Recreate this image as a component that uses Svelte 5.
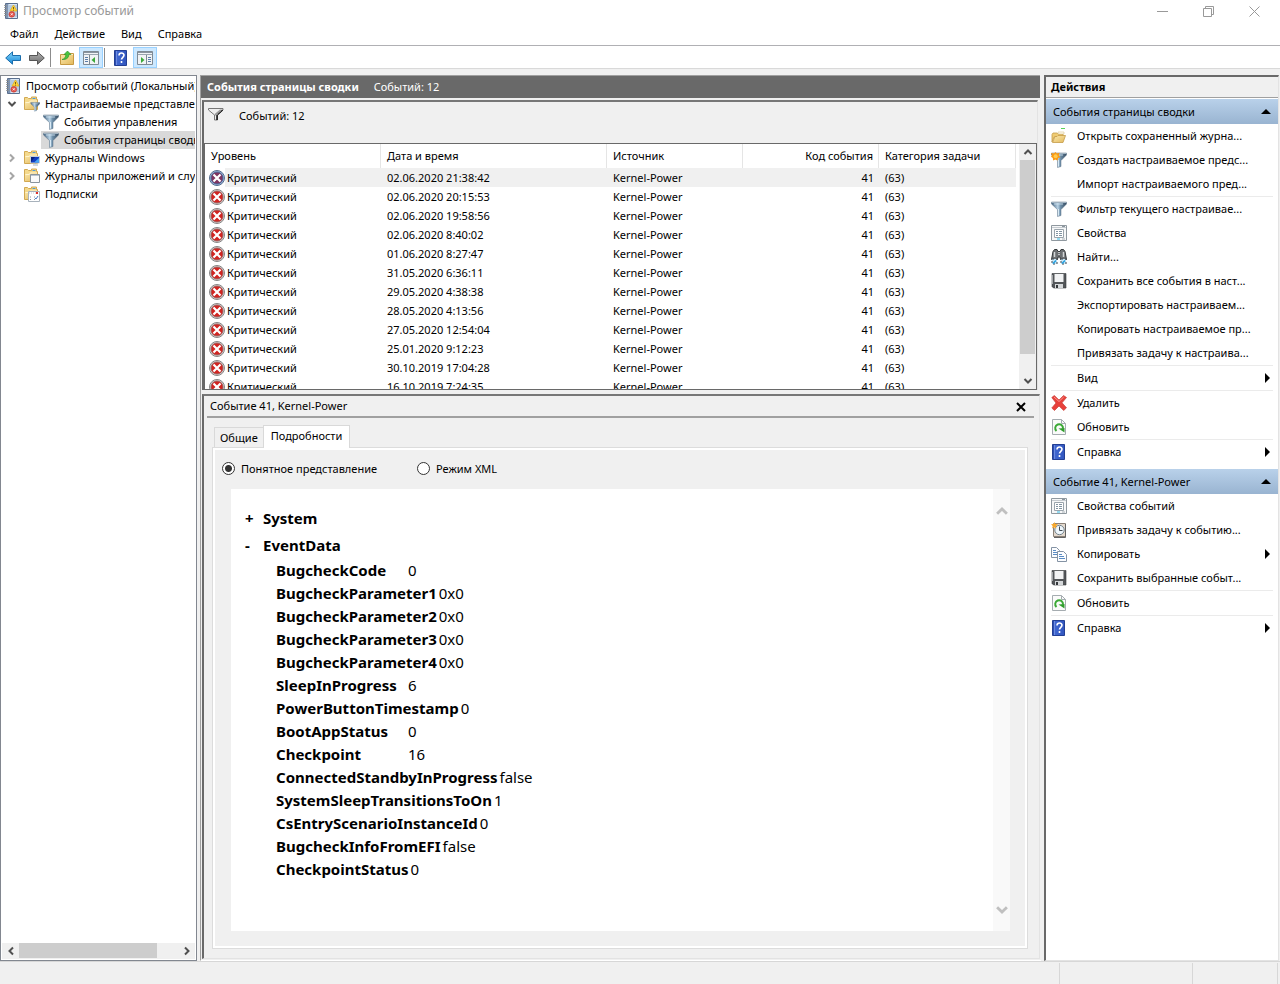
<script lang="ts">
	type Action = { icon?: string; label?: string; more?: boolean; separator?: boolean };

	const menu = ['Файл', 'Действие', 'Вид', 'Справка'];

	const tree = [
		{ label: 'Просмотр событий (Локальный)', icon: 'log', level: 0 },
		{ label: 'Настраиваемые представления', icon: 'folderFilter', level: 1, open: true },
		{ label: 'События управления', icon: 'filter', level: 2 },
		{ label: 'События страницы сводки', icon: 'filter', level: 2, selected: true },
		{ label: 'Журналы Windows', icon: 'folderScreen', level: 1, open: false },
		{ label: 'Журналы приложений и служб', icon: 'folderApp', level: 1, open: false },
		{ label: 'Подписки', icon: 'folderSub', level: 1 }
	];

	const dates = [
		'02.06.2020 21:38:42',
		'02.06.2020 20:15:53',
		'02.06.2020 19:58:56',
		'02.06.2020 8:40:02',
		'01.06.2020 8:27:47',
		'31.05.2020 6:36:11',
		'29.05.2020 4:38:38',
		'28.05.2020 4:13:56',
		'27.05.2020 12:54:04',
		'25.01.2020 9:12:23',
		'30.10.2019 17:04:28',
		'16.10.2019 7:24:35'
	];

	const eventData = [
		['BugcheckCode', '0'],
		['BugcheckParameter1', '0x0'],
		['BugcheckParameter2', '0x0'],
		['BugcheckParameter3', '0x0'],
		['BugcheckParameter4', '0x0'],
		['SleepInProgress', '6'],
		['PowerButtonTimestamp', '0'],
		['BootAppStatus', '0'],
		['Checkpoint', '16'],
		['ConnectedStandbyInProgress', 'false'],
		['SystemSleepTransitionsToOn', '1'],
		['CsEntryScenarioInstanceId', '0'],
		['BugcheckInfoFromEFI', 'false'],
		['CheckpointStatus', '0']
	];

	const groups: { title: string; items: Action[] }[] = [
		{
			title: 'События страницы сводки',
			items: [
				{ icon: 'open', label: 'Открыть сохраненный журна...' },
				{ icon: 'newFilter', label: 'Создать настраиваемое предс...' },
				{ label: 'Импорт настраиваемого пред...' },
				{ separator: true },
				{ icon: 'filter', label: 'Фильтр текущего настраивае...' },
				{ icon: 'props', label: 'Свойства' },
				{ icon: 'find', label: 'Найти...' },
				{ icon: 'save', label: 'Сохранить все события в наст...' },
				{ label: 'Экспортировать настраиваем...' },
				{ label: 'Копировать настраиваемое пр...' },
				{ label: 'Привязать задачу к настраива...' },
				{ separator: true },
				{ label: 'Вид', more: true },
				{ separator: true },
				{ icon: 'delete', label: 'Удалить' },
				{ icon: 'refresh', label: 'Обновить' },
				{ separator: true },
				{ icon: 'help', label: 'Справка', more: true }
			]
		},
		{
			title: 'Событие 41, Kernel-Power',
			items: [
				{ icon: 'props', label: 'Свойства событий' },
				{ icon: 'task', label: 'Привязать задачу к событию...' },
				{ icon: 'copy', label: 'Копировать', more: true },
				{ icon: 'save', label: 'Сохранить выбранные событ...' },
				{ separator: true },
				{ icon: 'refresh', label: 'Обновить' },
				{ separator: true },
				{ icon: 'help', label: 'Справка', more: true }
			]
		}
	];

	let selectedRow = $state(0);
	let view = $state('friendly');
</script>

<!-- gradients shared by the icons -->
<svg class="defs" aria-hidden="true">
	<defs>
		<linearGradient id="g-folder" x2="1" y2="1">
			<stop offset="0" stop-color="#fbe9ae" /><stop offset="1" stop-color="#e3b95c" />
		</linearGradient>
		<linearGradient id="g-funnel" x2="1" y2="0">
			<stop offset="0" stop-color="#3f5f7d" /><stop offset=".42" stop-color="#b9d3e6" /><stop offset=".6" stop-color="#6f90aa" /><stop offset="1" stop-color="#34495e" />
		</linearGradient>
		<linearGradient id="g-blue" x2="0" y2="1">
			<stop offset="0" stop-color="#83d4fa" /><stop offset="1" stop-color="#1687d6" />
		</linearGradient>
		<linearGradient id="g-gray" x2="0" y2="1">
			<stop offset="0" stop-color="#b4b4b4" /><stop offset="1" stop-color="#6c6c6c" />
		</linearGradient>
		<linearGradient id="g-help" x2="1" y2="0">
			<stop offset="0" stop-color="#2341a0" /><stop offset=".25" stop-color="#3f66cf" /><stop offset="1" stop-color="#3155be" />
		</linearGradient>
	</defs>
</svg>

{#snippet funnel()}
	<path d="M.5 1h15v2L10 8.600v5.900l-3.500 1V8.600L.5 3z" fill="url(#g-funnel)" stroke="#5c7386" stroke-width=".5" />
	<path d="M.5 1.500h15" stroke="#9fb1bf" />
	<path d="M3 3h9" stroke="#d6e6f1" stroke-width=".8" />
	<path d="M7.500 8v6.500" stroke="#d9eaf5" />
{/snippet}

{#snippet folder()}
	<path d="M.5 1.500h3l1 1h3V1h5v2.500h1v10H.5z" fill="#f4d98c" stroke="#d2a952" />
	<path d="M8.500 2.500h3" stroke="#4f9bd8" />
	<path d="M1 6h4l1-1.500h7V13H1z" fill="url(#g-folder)" />
	<path d="M1.500 6.500h3.800l1-1.500H13" fill="none" stroke="#fff3cc" />
{/snippet}

{#snippet icon(name: string)}
	<svg class="icon" viewBox="0 0 16 16" aria-hidden="true">
		{#if name === 'log'}
			<path d="M2.500.5h12v15h-12z" fill="#b5c9e0" stroke="#5a6f8e" />
			<path d="M3 1h2v14H3z" fill="#7d94b3" />
			<path d="M6 1.500h8M6 14.500h8" stroke="#dbe7f3" />
			<path d="M1 2.500h3M1 4.500h3M1 6.500h3M1 8.500h3M1 10.500h3M1 12.500h3" stroke="#8f8f8f" stroke-width=".8" />
			<path d="M10.500 2 14 8H7z" fill="#ffd33a" stroke="#e3b21c" stroke-width=".8" stroke-linejoin="round" />
			<path d="M10.500 4v2.200M10.500 6.800v.8" stroke="#5a4708" stroke-width=".8" />
			<circle cx="8.800" cy="11.300" r="2.900" fill="#e0524a" stroke="#c23029" stroke-width=".5" />
			<path d="m7.700 10.200 2.200 2.200m0-2.200-2.200 2.200" stroke="#fff" stroke-width=".8" />
		{:else if name === 'filter'}
			{@render funnel()}
		{:else if name === 'newFilter'}
			{@render funnel()}
			<path d="m4.500 0 1.200 1.500L8.500.8 7.800 3.500 9.500 5.200l-2.400.9-.4 2.400-2.200-1-2.400 1L1.800 6 0 4.800 1 2.900 0 .9l2.900.6z" fill="#fb9a12" />
			<circle cx="4.600" cy="4.200" r="2" fill="#ffcb4f" />
		{:else if name === 'folderFilter'}
			{@render folder()}
			<g transform="translate(6.500 6) scale(.6)">{@render funnel()}</g>
		{:else if name === 'folderScreen'}
			{@render folder()}
			<path d="M6.500 6.500h9v6.500h-9z" fill="#103cc0" stroke="#c4d0de" />
			<path d="M7 7h4l-4 5z" fill="#0a217c" /><path d="M10 12.500 15 8v4.500z" fill="#43a4f4" />
			<path d="M9 15h5M11 13.500h1" stroke="#a4b0bc" />
		{:else if name === 'folderApp'}
			{@render folder()}
			<path d="M6.500 6.500h9v8h-9z" fill="#fafafa" stroke="#8a949c" />
			<path d="M7 7.500h8" stroke="#b9c4cf" />
		{:else if name === 'folderSub'}
			{@render folder()}
			<path d="M4.500 5.500h11v10h-11z" fill="#fff" stroke="#a8b2bc" />
			<path d="M5 7h10" stroke="#c4ccd4" stroke-dasharray="1 1" />
			<path d="M6 11h2m2 0h2M6 13.500h2m2 0h2" stroke="#8b96a4" stroke-dasharray="1 1" />
			<path d="m12 6 2 2m0-2-2 2" stroke="#e0332c" /><path d="m11 12 1 1 2-3" fill="none" stroke="#4a7cc4" />
		{:else if name === 'back' || name === 'forward'}
			<path
				d="M.7 8 7.500 1.800v3.700h8v5h-8v3.700z"
				transform={name === 'forward' ? 'matrix(-1 0 0 1 16 0)' : undefined}
				fill={name === 'back' ? 'url(#g-blue)' : 'url(#g-gray)'}
				stroke={name === 'back' ? '#1a6cab' : '#555'}
				stroke-linejoin="round"
			/>
		{:else if name === 'up'}
			<path d="M1.500 4.500h5l1-1h7v11h-13z" fill="url(#g-folder)" stroke="#c79a42" />
			<path d="M10 4.500h4" stroke="#fff3cc" />
			<path d="M3 9.500C6 8.500 6.800 7 6.800 4.500H5L8.500 1 12 4.500H9.800C9.800 8 7.500 9.800 3 9.500z" fill="#49c43e" stroke="#258a22" stroke-width=".6" />
		{:else if name === 'paneLeft' || name === 'paneRight'}
			<path d="M.500 1.500h15v13H.500z" fill="#f1f3f5" stroke="#7f8a94" />
			<path d="M1 2.500h14" stroke="#8994a0" />
			<path d="M1 4.500h14" stroke="#9aa5b0" />
			{#if name === 'paneLeft'}
				<path d="M6.500 5v9" stroke="#7f8a94" /><path d="M2 7.500h3M2 9.500h3M2 11.500h3" stroke="#5a7ca8" />
				<path d="M12 7v6L8.500 10z" fill="#3ba93a" />
			{:else}
				<path d="M9.500 5v9" stroke="#7f8a94" /><path d="M11 7.500h3M11 9.500h3M11 11.500h3" stroke="#5a7ca8" />
				<path d="M4 7v6l3.500-3z" fill="#3ba93a" />
			{/if}
		{:else if name === 'help'}
			<path d="M1.500.5h12v15h-12z" fill="url(#g-help)" stroke="#233f94" />
			<path d="M3.500 1v14" stroke="#6c8be0" />
			<path d="M6 5.400c.1-3.300 5-3 5-.3 0 2.200-2.500 2.200-2.500 4.500M8.500 11v2" fill="none" stroke="#fff" stroke-width="1.600" />
		{:else if name === 'open'}
			<path d="M1 6.500 2 5h4l1 1h5v3H3L1 14z" fill="#efcb72" stroke="#c59c49" stroke-width=".8" />
			<path d="M1.500 14.500 4 8.500h2l1-1h7.500L12 14.500z" fill="url(#g-folder)" stroke="#c59c49" stroke-width=".8" />
			<path d="M7 4h6v2H7z" fill="#fffdf4" stroke="#d8c28c" stroke-width=".6" />
			<path d="M10 .500h4" stroke="#58d45a" />
		{:else if name === 'props'}
			<path d="M.500.500h15v15H.500z" fill="#f6f7f8" stroke="#8f989f" />
			<path d="M1 2.500h14" stroke="#c5cbd0" /><path d="M11 1.500h3" stroke="#8a959d" />
			<path d="M3.500 4.500h9v8h-9z" fill="#fff" stroke="#9aa4ac" />
			<path d="M5 6.500h2m1 0h3M5 8.500h2m1 0h3M5 10.500h2m1 0h3" stroke="#8294a2" />
			<path d="M6 14h3" stroke="#33bde8" /><path d="M11 14h3" stroke="#aab2b8" />
		{:else if name === 'find'}
			<path d="M2 2.500 3.500.500H6l1 2h2l1-2h2.500l1.500 2 1.500 8h-6L9 8H7l-.5 2.500h-6z" fill="#6d7073" stroke="#35383b" />
			<path d="M3.500 3v5m9-5v5" stroke="#d4d6d8" stroke-width="1.500" />
			<path d="M7 3.500h2m-2 2h2" stroke="#c0c3c6" />
			<path d="M1 10h5v5H1zm9 0h5v5h-5z" fill="#c5e7f9" stroke="#3e474e" stroke-dasharray="2 2" />
			<path d="m2 14.500 3-3m6 3 3-3" stroke="#229fe0" stroke-width="1.500" />
		{:else if name === 'save'}
			<path d="M1 .500h14v14.500H2.500L1 13.500z" fill="#535659" stroke="#36393c" stroke-width=".6" />
			<path d="M3.500 1h9v8h-9z" fill="#f2f3f4" /><path d="M4 11h8v4H4z" fill="#d5d8da" />
			<path d="M5 12h2v3H5z" fill="#34373a" /><path d="M1.500 2v9" stroke="#a2a5a8" />
		{:else if name === 'delete'}
			<path d="m.8 2.500 2.500-2L8 5l4.500-4.500 3 2L11 7.800l4.500 5-2.800 2.700L8 11l-4.500 4.500L.8 13 5 8z" fill="#e8413b" stroke="#c8403a" stroke-width=".7" />
			<path d="m3 2 5 4.500L12.700 2" fill="none" stroke="#fa948d" />
		{:else if name === 'refresh'}
			<path d="M1.500.500h9l4 4v11h-13z" fill="#fafbfa" stroke="#a5acb0" /><path d="M10.500.500v4h4" fill="none" stroke="#a5acb0" />
			<path d="M5.500 12a3.900 3.900 0 1 1 6.500-2.500" fill="none" stroke="#3ba936" stroke-width="2" />
			<path d="M7.500 9.500 13.500 9v4.500z" fill="#2f9c2b" />
		{:else if name === 'task'}
			<path d="M2.500 1.500h12v13h-12z" fill="#e3d9ce" stroke="#8b8177" /><path d="M14.500 2v13.500H3" fill="none" stroke="#646464" />
			<circle cx="8.500" cy="8" r="4.700" fill="#eef6fb" stroke="#74828b" />
			<path d="M8.500 4.500v4h3" fill="none" stroke="#404a52" />
			<path d="m3.500 0 .8 2L7 2.200 5 4l.3 2.400-2-1.200L1 6.400l.7-2.500L0 2.200 2.500 2z" fill="#f7a82c" />
		{:else if name === 'copy'}
			<path d="M.5 1.500h5l3 3v7h-8z" fill="#fcfdff" stroke="#8493a4" />
			<path d="M2 4.500h3M2 6.500h5M2 8.500h4" stroke="#5a8cc4" />
			<path d="M6.500 5.500h6l3 3v7h-9z" fill="#fcfdff" stroke="#8493a4" />
			<path d="M8 8.500h3M8 10.500h5M8 12.500h6" stroke="#5a8cc4" />
		{/if}
	</svg>
{/snippet}

{#snippet chevron(dir: string)}
	<svg class="chevron {dir}" viewBox="0 0 10 10" aria-hidden="true">
		<path d="m1.500 3 3.500 3.500L8.500 3" />
	</svg>
{/snippet}

<div class="window">
	<header class="titlebar">
		{@render icon('log')}
		<span class="title">Просмотр событий</span>
		<button aria-label="Свернуть"><svg viewBox="0 0 11 11"><path d="M0 5.500h11" /></svg></button>
		<button aria-label="Развернуть"><svg viewBox="0 0 11 11"><path d="M.5 2.500h8v8h-8zM2.500 2.500v-2h8v8h-2" /></svg></button>
		<button aria-label="Закрыть"><svg viewBox="0 0 11 11"><path d="m.5.5 10 10m0-10-10 10" /></svg></button>
	</header>

	<nav class="menubar">
		{#each menu as item}
			<button>{item}</button>
		{/each}
	</nav>

	<div class="toolbar">
		<button aria-label="Назад">{@render icon('back')}</button>
		<button aria-label="Вперед">{@render icon('forward')}</button>
		<i></i>
		<button aria-label="Вверх">{@render icon('up')}</button>
		<button class="on" aria-label="Дерево консоли">{@render icon('paneLeft')}</button>
		<i></i>
		<button aria-label="Справка">{@render icon('help')}</button>
		<button class="on" aria-label="Панель действий">{@render icon('paneRight')}</button>
	</div>

	<main>
		<aside class="tree">
			<ul>
				{#each tree as node}
					<li class="level{node.level}" class:selected={node.selected}>
						{#if node.level === 1}
							<span class="toggle">
								{#if node.open !== undefined}{@render chevron(node.open ? 'down' : 'right')}{/if}
							</span>
						{/if}
						<span class="node">{@render icon(node.icon)}<span>{node.label}</span></span>
					</li>
				{/each}
			</ul>
			<div class="hscroll">
				<button aria-label="Влево">{@render chevron('left')}</button>
				<div class="track"><div class="thumb"></div></div>
				<button aria-label="Вправо">{@render chevron('right')}</button>
			</div>
		</aside>

		<section class="center">
			<h1>События страницы сводки <span>Событий: 12</span></h1>

			<div class="events">
				<div class="summary">
					<svg viewBox="0 0 16 13" aria-hidden="true">
						<path d="M.5.500h14.500v1.500L9.500 7v5h-3V7L.5 2z" fill="#eee" stroke="#777" />
						<path d="M9 7v5M9.500 6.500 14.500 2" stroke="#111" stroke-width="1.500" />
						<path d="m7 7 6-5" stroke="#999" stroke-width="2" />
					</svg>
					<span>Событий: 12</span>
				</div>
				<div class="list">
					<div class="rows">
						<table>
							<colgroup>
								<col class="c-level" /><col class="c-date" /><col class="c-source" /><col class="c-code" /><col />
							</colgroup>
							<thead>
								<tr>
									<th>Уровень</th>
									<th>Дата и время</th>
									<th>Источник</th>
									<th class="num">Код события</th>
									<th>Категория задачи</th>
								</tr>
							</thead>
							<tbody>
								{#each dates as date, i}
									<tr class:selected={selectedRow === i} onclick={() => (selectedRow = i)}>
										<td class="level">
											<div>
												<svg class="critical" viewBox="0 0 16 16" aria-hidden="true">
													<circle cx="8" cy="8" r="7.500" class="rim" />
													<circle cx="8" cy="8" r="6" class="disc" />
													<path d="m4.500 4.500 7 7m0-7-7 7" stroke="#fff" stroke-width="2.200" />
												</svg>
												<span>Критический</span>
											</div>
										</td>
										<td>{date}</td>
										<td>Kernel-Power</td>
										<td class="num">41</td>
										<td>(63)</td>
									</tr>
								{/each}
							</tbody>
						</table>
					</div>
					<div class="vscroll">
						<button aria-label="Вверх">{@render chevron('up')}</button>
						<div class="track"><div class="thumb"></div></div>
						<button aria-label="Вниз">{@render chevron('down')}</button>
					</div>
				</div>
			</div>

			<div class="details">
				<header>
					<h2>Событие 41, Kernel-Power</h2>
					<button aria-label="Закрыть"><svg viewBox="0 0 10 10"><path d="m1 1 8 8m0-8-8 8" /></svg></button>
				</header>
				<div class="tabs" role="tablist">
					<button role="tab" aria-selected="false">Общие</button>
					<button role="tab" aria-selected="true">Подробности</button>
				</div>
				<div class="tabpage">
					<div class="modes">
						<label><input type="radio" name="view" value="friendly" bind:group={view} />Понятное представление</label>
						<label><input type="radio" name="view" value="xml" bind:group={view} />Режим XML</label>
					</div>
					<div class="viewer">
						<div class="content">
							<h3><span>+</span>System</h3>
							<h3><span>-</span>EventData</h3>
							<dl>
								{#each eventData as [name, value]}
									<div><dt>{name}</dt><dd>{value}</dd></div>
								{/each}
							</dl>
						</div>
						<div class="vscroll pale">
							<button aria-label="Вверх">{@render chevron('up')}</button>
							<button aria-label="Вниз">{@render chevron('down')}</button>
						</div>
					</div>
				</div>
			</div>
		</section>

		<aside class="actions">
			<h2>Действия</h2>
			{#each groups as group}
				<section>
					<h3>{group.title}<svg viewBox="0 0 10 5" aria-hidden="true"><path d="M0 5 5 0l5 5z" /></svg></h3>
					{#each group.items as item}
						{#if item.separator}
							<hr />
						{:else}
							<button>
								<span class="slot">{#if item.icon}{@render icon(item.icon)}{/if}</span>
								<span class="label">{item.label}</span>
								{#if item.more}
									<svg class="more" viewBox="0 0 5 10" aria-hidden="true"><path d="m0 0 5 5-5 5z" /></svg>
								{/if}
							</button>
						{/if}
					{/each}
				</section>
			{/each}
		</aside>
	</main>

	<footer><span></span><span></span></footer>
</div>

<style>
	:global(body) {
		font-family: 'Noto Sans', 'Open Sans', sans-serif;
		font-size: 11px;
		color: #000;
	}

	.window, .window * {
		box-sizing: border-box;
	}

	.window {
		height: 100vh;
		display: flex;
		flex-direction: column;
		background: #f0f0f0;
		line-height: 18px;
	}

	.defs {
		position: absolute;
		width: 0;
		height: 0;
	}

	button {
		border: 0;
		padding: 0;
		background: none;
		font: inherit;
		color: inherit;
	}

	h1, h2, h3, ul, dl, dd {
		margin: 0;
		padding: 0;
		font-size: inherit;
	}

	svg {
		display: block;
		flex: none;
	}

	.icon {
		width: 16px;
		height: 16px;
	}

	.chevron {
		width: 10px;
		height: 10px;
		fill: none;
		stroke: #505050;
		stroke-width: 2;
	}

	.chevron.up { transform: rotate(180deg); }
	.chevron.left { transform: rotate(90deg); }
	.chevron.right { transform: rotate(-90deg); }

	/* window chrome */
	.titlebar {
		display: flex;
		align-items: center;
		height: 24px;
		padding: 0 3px 2px;
		background: #fff;
		color: #999;
	}

	.title {
		flex: 1;
		margin-left: 4px;
		font-size: 12px;
	}

	.titlebar button {
		display: grid;
		place-items: center;
		width: 46px;
		height: 20px;
	}

	.titlebar button svg {
		width: 11px;
		height: 11px;
		fill: none;
		stroke: #999;
	}

	.menubar {
		display: flex;
		gap: 16px;
		height: 22px;
		padding-left: 10px;
		background: #fff;
		border-bottom: 1px solid #b0b0b4;
	}

	.menubar button {
		height: 20px;
	}

	.toolbar {
		display: flex;
		height: 23px;
		padding: 1px 1px 0;
		background: #fff;
		border-bottom: 1px solid #d9d9d9;
	}

	.toolbar button {
		display: grid;
		place-items: center;
		width: 24px;
		height: 21px;
	}

	.toolbar .on {
		background: #cce8ff;
		border: 1px solid #99d1ff;
	}

	.toolbar i {
		width: 1px;
		margin: 1px 4px 1px 1px;
		background: #8c8c8c;
	}

	main {
		flex: 1;
		min-height: 0;
		display: flex;
		gap: 3px;
		padding: 6px 1px 0 0;
	}

	/* tree */
	.tree {
		display: flex;
		flex-direction: column;
		width: 197px;
		padding: 1px;
		background: #fff;
		border: 1px solid #828790;
	}

	.tree ul {
		flex: 1;
		min-height: 0;
		overflow: hidden;
		list-style: none;
	}

	.tree li {
		display: flex;
		height: 18px;
		white-space: nowrap;
	}

	.tree .node {
		flex: 1;
		display: flex;
		align-items: center;
		gap: 5px;
		padding-left: 2px;
	}

	.level0 { padding-left: 1px; }
	.level2 { padding-left: 39px; }

	.tree .selected .node {
		background: #d9d9d9;
	}

	.toggle {
		flex: none;
		display: grid;
		place-items: center;
		width: 20px;
	}

	.toggle .right {
		stroke: #a6a6a6;
	}

	.hscroll {
		display: flex;
		height: 16px;
		background: #f0f0f0;
	}

	.hscroll button, .vscroll button {
		display: grid;
		place-items: center;
		width: 17px;
		height: 16px;
	}

	.hscroll .track {
		flex: 1;
	}

	.hscroll .thumb {
		width: 87%;
		height: 15px;
		background: #cdcdcd;
	}

	/* centre */
	.center {
		flex: 1;
		min-width: 0;
		display: flex;
		flex-direction: column;
		padding: 0 1px 1px 0;
		border-left: 1px solid #a0a0a0;
		border-bottom: 1px solid #fff;
	}

	h1 {
		height: 23px;
		padding: 2px 6px 0;
		border-top: 1px solid #a0a0a0;
		background: #696969;
		color: #fff;
		font-weight: 700;
	}

	h1 span {
		margin-left: 12px;
		font-weight: 400;
	}

	.events {
		flex: none;
		display: flex;
		flex-direction: column;
		height: 290px;
		margin: 2px 2px 4px 1px;
		border: solid #696969;
		border-width: 2px 1px 0 2px;
		border-top-color: #777;
		border-right-color: #e3e3e3;
	}

	.summary {
		display: flex;
		gap: 15px;
		height: 41px;
		padding: 5px 4px;
	}

	.summary svg {
		width: 16px;
		height: 13px;
		margin-top: 1px;
	}

	.list {
		flex: 1;
		min-height: 0;
		display: flex;
		background: #fff;
		border: 1px solid #696969;
	}

	.rows {
		flex: 1;
		min-width: 0;
		margin-right: 3px;
		overflow: hidden;
	}

	table {
		width: 100%;
		table-layout: fixed;
		border-collapse: separate;
		border-spacing: 0;
		white-space: nowrap;
		text-align: left;
	}

	.c-level { width: 176px; }
	.c-date { width: 226px; }
	.c-source, .c-code { width: 136px; }

	th {
		height: 24px;
		padding: 0 6px;
		border-right: 1px solid #e5e5e5;
		font-weight: 400;
	}

	td {
		height: 19px;
		padding: 0 6px;
	}

	.num {
		padding-right: 5px;
		text-align: right;
	}

	tbody .selected td, tbody .selected .level span {
		background: #f0f0f0;
	}

	tbody td.level {
		padding: 0 0 0 4px;
	}

	tbody .selected td.level {
		background: none;
	}

	.level div {
		display: flex;
		align-items: center;
	}

	.level span {
		flex: 1;
		height: 19px;
		padding-left: 2px;
		line-height: 20px;
	}

	.critical {
		width: 16px;
		height: 16px;
	}

	.rim { fill: #dcdcdc; stroke: #858585; }
	.disc { fill: #d12421; stroke: #a05a58; }
	.selected .rim { fill: #a2c2e5; stroke: #566c8c; }
	.selected .disc { fill: #7d3460; stroke: #4d5f90; }

	.vscroll {
		display: flex;
		flex-direction: column;
		width: 17px;
		background: #f0f0f0;
	}

	.vscroll .track {
		flex: 1;
	}

	.vscroll .thumb {
		width: 15px;
		height: 91%;
		margin: 0 1px;
		background: #cdcdcd;
	}

	.details {
		flex: 1;
		min-height: 0;
		display: flex;
		flex-direction: column;
		margin-left: 1px;
		padding: 0 11px 9px 8px;
		border: 2px solid #696969;
		border-top-color: #777;
		border-right: 1px solid #e3e3e3;
		border-bottom: 1px solid #e3e3e3;
	}

	.details header {
		display: flex;
		justify-content: space-between;
		height: 22px;
		margin: 0 -6px 0 -5px;
		padding: 1px 8px 0 3px;
		border-bottom: 2px solid #a0a0a0;
	}

	.details h2 {
		font-weight: 400;
	}

	.details header svg {
		width: 10px;
		height: 10px;
		stroke: #000;
		stroke-width: 2;
	}

	.tabs {
		display: flex;
		align-items: flex-end;
		height: 29px;
		padding-left: 2px;
	}

	.tabs button {
		height: 20px;
		padding: 0 5px;
		border: 1px solid #d9d9d9;
		border-bottom: 0;
	}

	.tabs [aria-selected='true'] {
		height: 23px;
		margin-bottom: -1px;
		margin-left: -1px;
		padding: 0 7px 2px;
		background: #fff;
		position: relative;
	}

	.tabpage {
		flex: 1;
		min-height: 0;
		display: flex;
		flex-direction: column;
		padding: 0 17px 17px 18px;
		border: 1px solid #dcdcdc;
		outline: 2px solid #fff;
		outline-offset: -3px;
	}

	.modes {
		display: flex;
		gap: 40px;
		height: 41px;
		margin-left: -9px;
	}

	.modes label {
		display: flex;
		align-items: center;
		gap: 6px;
	}

	.modes input {
		appearance: none;
		width: 13px;
		height: 13px;
		margin: 0;
		border: 1px solid #333;
		border-radius: 50%;
		background: #fff;
	}

	.modes input:checked {
		background: radial-gradient(#333 0 3px, #fff 4px);
	}

	.viewer {
		flex: 1;
		min-height: 0;
		display: flex;
		background: #fff;
	}

	.content {
		flex: 1;
		overflow: hidden;
		padding: 16px 14px;
		font-size: 15px;
		line-height: 23px;
	}

	.content h3 {
		display: flex;
		height: 27px;
		line-height: 27px;
	}

	.content h3 span {
		width: 18px;
	}

	dl {
		padding-left: 31px;
	}

	dl div {
		display: flex;
	}

	dt {
		min-width: 132px;
		padding-right: 2px;
		font-weight: 700;
	}

	.pale {
		justify-content: space-between;
		background: #f9f9f9;
	}

	.pale button {
		height: 43px;
	}

	.pale .chevron {
		width: 14px;
		height: 14px;
		stroke: #c0c0c0;
	}

	/* actions */
	.actions {
		width: 235px;
		background: #fff;
		border: 2px solid #696969;
		border-right: 1px solid #e3e3e3;
		border-bottom: 1px solid #e3e3e3;
		overflow: hidden;
	}

	.actions h2 {
		height: 21px;
		padding: 1px 5px;
		background: #f0f0f0;
		border-bottom: 1px solid #a0a0a0;
	}

	.actions section {
		margin: 1px 0 5px;
	}

	.actions section + section {
		margin-top: 0;
	}

	.actions h3 {
		display: flex;
		align-items: center;
		justify-content: space-between;
		height: 25px;
		padding: 0 7px;
		background: linear-gradient(#b9d1ea, #99b4d1);
		font-weight: 400;
	}

	.actions h3 svg {
		width: 10px;
		height: 5px;
	}

	.actions button {
		display: flex;
		align-items: center;
		width: 100%;
		height: 24px;
		padding: 0 8px 0 5px;
		text-align: left;
		white-space: nowrap;
	}

	.slot {
		width: 26px;
	}

	.label {
		flex: 1;
	}

	.more {
		width: 5px;
		height: 10px;
	}

	hr {
		height: 1px;
		margin: 0 5px;
		border: 0;
		background: #ebebeb;
	}

	footer {
		display: flex;
		justify-content: flex-end;
		height: 23px;
		padding: 1px 2px 0 0;
		border-top: 1px solid #d7d7d7;
	}

	footer span {
		width: 133px;
		border-left: 1px solid #d7d7d7;
	}

	footer span:last-child {
		width: 86px;
		border-right: 1px solid #d7d7d7;
	}
</style>
